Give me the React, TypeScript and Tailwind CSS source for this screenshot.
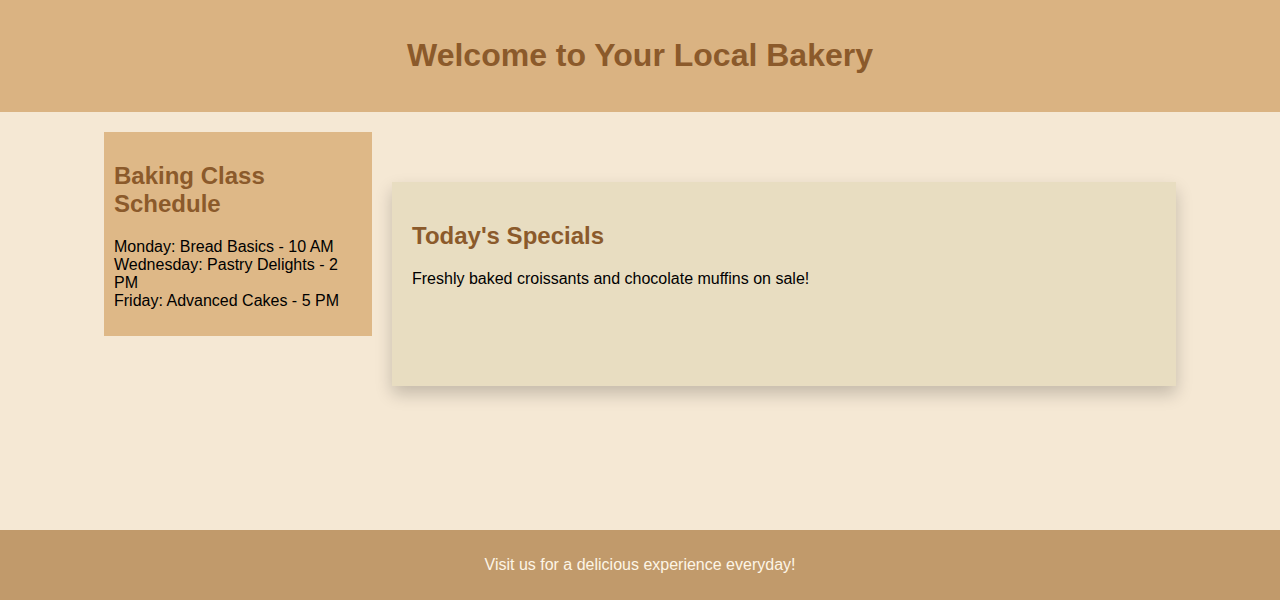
import React from "react";

const classes = [
  "Monday: Bread Basics - 10 AM",
  "Wednesday: Pastry Delights - 2 PM",
  "Friday: Advanced Cakes - 5 PM",
];

export default function App() {
  return (
    <div className="flex flex-col min-h-[600px] bg-[#f5e8d4] font-['Liberation_Sans',Arial,sans-serif] text-black">
      <header className="h-[112px] pb-[2px] bg-[#dab382] flex items-center justify-center">
        <h1 className="text-[32px] leading-[37px] font-bold text-[#8b5a2b]">
          Welcome to Your Local Bakery
        </h1>
      </header>

      <main className="h-[418px] pt-5">
        <div className="w-[1072px] mx-auto flex items-start gap-5">
          <aside className="w-[268px] shrink-0 bg-[#deb887] p-[10px]">
            <h2 className="mt-5 mb-5 text-2xl leading-7 font-bold text-[#8b5a2b]">
              Baking Class Schedule
            </h2>
            <p className="mb-4 text-base leading-[18px]">
              {classes.map((c) => (
                <React.Fragment key={c}>
                  {c}
                  <br />
                </React.Fragment>
              ))}
            </p>
          </aside>

          <section className="flex-1 mt-[50px] h-[204px] bg-[#e8ddc1] p-5 shadow-[0_8px_16px_rgba(0,0,0,0.2)]">
            <h2 className="mt-5 text-2xl leading-7 font-bold text-[#8b5a2b]">
              Today's Specials
            </h2>
            <p className="mt-5 text-base leading-[18px]">
              Freshly baked croissants and chocolate muffins on sale!
            </p>
          </section>
        </div>
      </main>

      <footer className="h-[70px] bg-[#c19a6b] flex items-center justify-center">
        <p className="text-base leading-[18px] text-[#fdf5e6]">
          Visit us for a delicious experience everyday!
        </p>
      </footer>
    </div>
  );
}
